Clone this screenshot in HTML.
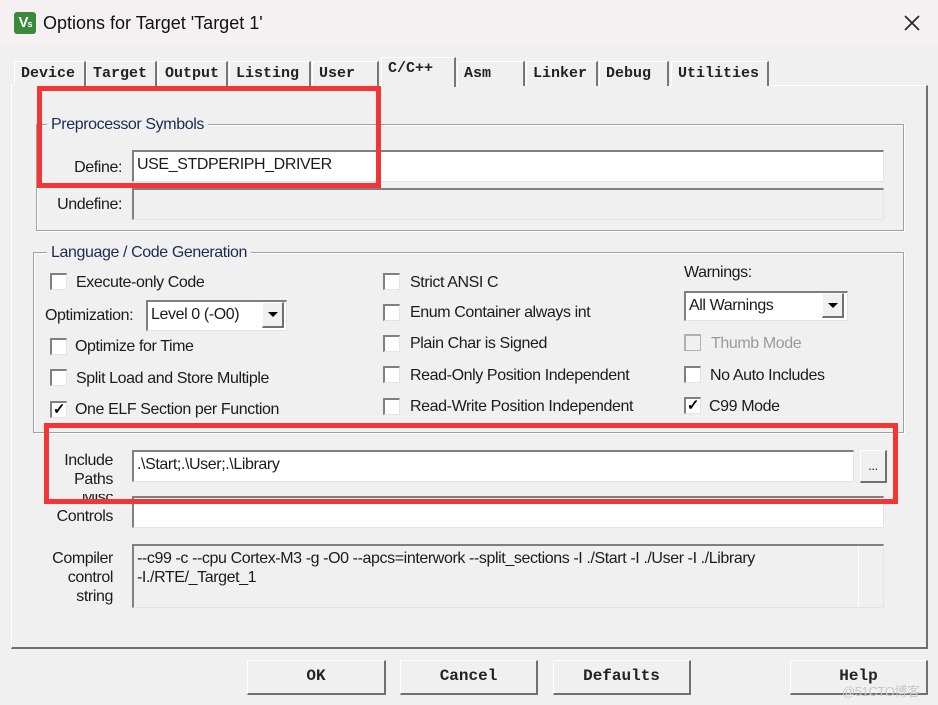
<!DOCTYPE html>
<html><head><meta charset="utf-8"><style>
*{margin:0;padding:0;box-sizing:border-box}
body{width:938px;height:705px;background:#f0f0f0;position:relative;overflow:hidden;font-family:"Liberation Sans",sans-serif;font-size:16px;color:#1b1b1b;letter-spacing:-0.4px}
.a{position:absolute;white-space:nowrap}
.tb{position:absolute;top:0;left:0;width:938px;height:46px;background:#f5f1f3}
.tab{position:absolute;top:61px;height:25px;border-top:1px solid #fff;border-left:1px solid #fff;border-right:2px solid #777;font-family:"Liberation Mono",monospace;font-weight:bold;font-size:15px;letter-spacing:0;padding:3px 0 0 6px;color:#222;background:#f0f0f0}
.grp{position:absolute;border:1px solid #a0a0a0;box-shadow:inset 1px 1px 0 #fff,1px 1px 0 #fff}
.lg{position:absolute;background:#f0f0f0;padding:0 4px;color:#1e2a50}
.inp{position:absolute;background:#fff;border-top:2px solid #808080;border-left:2px solid #808080;border-right:1px solid #e4e4e4;border-bottom:1px solid #e4e4e4;padding:4px 3px 0}
.dis{background:#f0f0f0}
.cb{position:absolute;width:17px;height:17px;background:#fff;border-top:2px solid #808080;border-left:2px solid #808080;border-right:1px solid #e4e4e4;border-bottom:1px solid #e4e4e4;font-size:15px;line-height:13px;text-align:center;font-weight:bold;color:#000}
.btn{position:absolute;top:660px;height:35px;background:#f0f0f0;border-top:1px solid #fff;border-left:1px solid #fff;border-right:2px solid #707070;border-bottom:2px solid #707070;text-align:center;font-family:"Liberation Mono",monospace;font-weight:bold;font-size:16px;letter-spacing:0;line-height:31px;color:#222}
.red{position:absolute;border:5px solid #f33535}
.dd{position:absolute;width:22px;background:#f0f0f0;border-top:1px solid #fff;border-left:1px solid #fff;border-right:2px solid #707070;border-bottom:2px solid #707070}
.dd:after{content:"";position:absolute;left:5px;top:9px;border-left:5px solid transparent;border-right:5px solid transparent;border-top:5px solid #000}
.lbl{position:absolute;text-align:right;line-height:19px}
</style></head><body>
<div class="tb"></div>
<div class="a" style="left:14px;top:12px;width:22px;height:22px;background:#3b8a3b;border-radius:3px;color:#fff;font-weight:bold;font-size:15px;line-height:22px;text-align:center;letter-spacing:-1px">V<span style="font-size:9px">s</span></div>
<div class="a" style="left:43px;top:13px;font-size:18px;color:#111;letter-spacing:0">Options for Target 'Target 1'</div>
<svg class="a" style="left:903px;top:14px" width="18" height="18"><path d="M2 2L16 16M16 2L2 16" stroke="#222" stroke-width="1.6"/></svg>

<div class="a" style="left:11px;top:85px;width:917px;height:564px;border-top:1px solid #fff;border-left:1px solid #fff;border-right:2px solid #707070;border-bottom:2px solid #707070"></div>
<div class="tab" style="left:14px;width:72px">Device</div>
<div class="tab" style="left:86px;width:71px">Target</div>
<div class="tab" style="left:158px;width:70px">Output</div>
<div class="tab" style="left:229px;width:82px">Listing</div>
<div class="tab" style="left:312px;width:67px">User</div>
<div class="tab" style="left:381px;width:75px;top:57px;height:30px;border-bottom:none;padding-top:2px">C/C++</div>
<div class="tab" style="left:457px;width:68px">Asm</div>
<div class="tab" style="left:526px;width:72px">Linker</div>
<div class="tab" style="left:599px;width:70px">Debug</div>
<div class="tab" style="left:671px;width:98px">Utilities</div>

<div class="grp" style="left:36px;top:124px;width:868px;height:107px"></div>
<div class="lg" style="left:47px;top:116px">Preprocessor Symbols</div>
<div class="lbl" style="left:40px;width:82px;top:158px">Define:</div>
<div class="inp" style="left:132px;top:150px;width:752px;height:32px">USE_STDPERIPH_DRIVER</div>
<div class="lbl" style="left:40px;width:82px;top:195px">Undefine:</div>
<div class="inp dis" style="left:132px;top:188px;width:752px;height:32px"></div>

<div class="grp" style="left:33px;top:252px;width:871px;height:181px"></div>
<div class="lg" style="left:47px;top:244px">Language / Code Generation</div>

<div class="cb" style="left:50px;top:273px"></div><div class="a" style="left:76px;top:274px">Execute-only Code</div>
<div class="a" style="left:45px;top:307px">Optimization:</div>
<div class="inp" style="left:146px;top:300px;width:141px;height:31px">Level 0 (-O0)</div><div class="dd" style="left:262px;top:302px;height:26px"></div>
<div class="cb" style="left:50px;top:338px"></div><div class="a" style="left:75px;top:338px">Optimize for Time</div>
<div class="cb" style="left:50px;top:369px"></div><div class="a" style="left:76px;top:370px">Split Load and Store Multiple</div>
<div class="cb" style="left:50px;top:401px">✓</div><div class="a" style="left:75px;top:401px">One ELF Section per Function</div>

<div class="cb" style="left:383px;top:273px"></div><div class="a" style="left:410px;top:274px">Strict ANSI C</div>
<div class="cb" style="left:383px;top:304px"></div><div class="a" style="left:410px;top:304px">Enum Container always int</div>
<div class="cb" style="left:383px;top:335px"></div><div class="a" style="left:410px;top:335px">Plain Char is Signed</div>
<div class="cb" style="left:383px;top:366px"></div><div class="a" style="left:410px;top:367px">Read-Only Position Independent</div>
<div class="cb" style="left:383px;top:398px"></div><div class="a" style="left:410px;top:398px">Read-Write Position Independent</div>

<div class="a" style="left:684px;top:264px">Warnings:</div>
<div class="inp" style="left:684px;top:291px;width:164px;height:30px">All Warnings</div><div class="dd" style="left:822px;top:293px;height:25px"></div>
<div class="cb" style="left:684px;top:334px;background:#f0f0f0;border-color:#b0b0b0"></div><div class="a" style="left:711px;top:335px;color:#9a9a9a">Thumb Mode</div>
<div class="cb" style="left:684px;top:366px"></div><div class="a" style="left:710px;top:367px">No Auto Includes</div>
<div class="cb" style="left:684px;top:397px">✓</div><div class="a" style="left:709px;top:398px">C99 Mode</div>

<div class="lbl" style="left:40px;width:73px;top:451px">Include<br>Paths</div>
<div class="inp" style="left:132px;top:450px;width:722px;height:32px">.\Start;.\User;.\Library</div>
<div class="a" style="left:860px;top:450px;width:27px;height:33px;border-top:1px solid #fff;border-left:1px solid #fff;border-right:2px solid #707070;border-bottom:2px solid #707070;text-align:center;font-size:13px;line-height:30px">...</div>
<div class="lbl" style="left:40px;width:73px;top:494px;overflow:hidden;height:38px;line-height:19px"><div style="margin-top:-6px">Misc<br>Controls</div></div>
<div class="inp" style="left:132px;top:496px;width:752px;height:32px"></div>
<div class="lbl" style="left:40px;width:73px;top:549px">Compiler<br>control<br>string</div>
<div class="inp dis" style="left:132px;top:544px;width:752px;height:64px;line-height:19px;padding-top:3px">--c99 -c --cpu Cortex-M3 -g -O0 --apcs=interwork --split_sections -I ./Start -I ./User -I ./Library<br>-I./RTE/_Target_1</div>
<div class="a" style="left:858px;top:546px;width:1px;height:61px;background:#fff"></div>

<div class="red" style="left:37px;top:86px;width:344px;height:102px"></div>
<div class="red" style="left:44px;top:423px;width:854px;height:81px"></div>

<div class="btn" style="left:247px;width:139px">OK</div>
<div class="btn" style="left:400px;width:138px">Cancel</div>
<div class="btn" style="left:553px;width:138px">Defaults</div>
<div class="btn" style="left:790px;width:138px">Help</div>
<div class="a" style="left:842px;top:681px;font-size:13px;color:#c8c8c8">@51CTO博客</div>
</body></html>
